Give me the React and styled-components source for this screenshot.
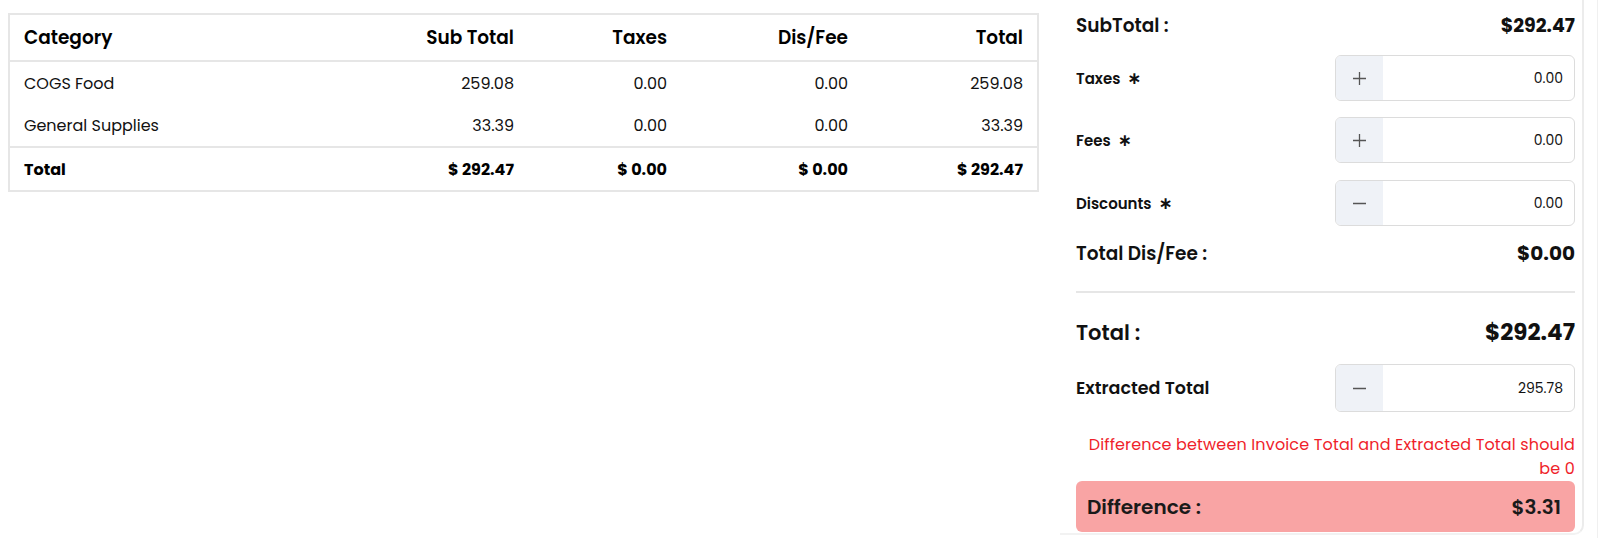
import React from "react";
import styled, { createGlobalStyle } from "styled-components";

const FONT = `"Poppins", "Open Sans", "Noto Sans", sans-serif`;

const GlobalStyle = createGlobalStyle`
  * { box-sizing: border-box; }
  body {
    margin: 0;
    background: #ffffff;
    font-family: ${FONT};
    color: #111;
  }
`;

const rows = [
  { category: "COGS Food", sub: "259.08", taxes: "0.00", fee: "0.00", total: "259.08" },
  { category: "General Supplies", sub: "33.39", taxes: "0.00", fee: "0.00", total: "33.39" },
];

const Plus = () => (
  <svg width="15" height="15" viewBox="0 0 15 15" fill="none">
    <path d="M7.5 1v13M1 7.5h13" stroke="#555" strokeWidth="1.3" />
  </svg>
);

const Minus = () => (
  <svg width="15" height="15" viewBox="0 0 15 15" fill="none">
    <path d="M1 7.5h13" stroke="#555" strokeWidth="1.3" />
  </svg>
);

const App = () => {
  return (
    <>
      <GlobalStyle />
      <Page>
        <TableWrap>
          <Table>
            <colgroup>
              <col style={{ width: 338 }} />
              <col style={{ width: 180 }} />
              <col style={{ width: 153 }} />
              <col style={{ width: 181 }} />
              <col style={{ width: 175 }} />
            </colgroup>
            <thead>
              <tr>
                <Th>Category</Th>
                <Th $right>Sub Total</Th>
                <Th $right>Taxes</Th>
                <Th $right>Dis/Fee</Th>
                <Th $right>Total</Th>
              </tr>
            </thead>
            <tbody>
              {rows.map((r) => (
                <tr key={r.category}>
                  <Td>{r.category}</Td>
                  <Td $right>{r.sub}</Td>
                  <Td $right>{r.taxes}</Td>
                  <Td $right>{r.fee}</Td>
                  <Td $right>{r.total}</Td>
                </tr>
              ))}
            </tbody>
            <tfoot>
              <tr>
                <Tf>Total</Tf>
                <Tf $right>$ 292.47</Tf>
                <Tf $right>$ 0.00</Tf>
                <Tf $right>$ 0.00</Tf>
                <Tf $right>$ 292.47</Tf>
              </tr>
            </tfoot>
          </Table>
        </TableWrap>

        <Summary>
          <SumRow>
            <SumLabel $size={18.5}>SubTotal :</SumLabel>
            <SumValue $size={19}>$292.47</SumValue>
          </SumRow>

          <InputRow $mt={5}>
            <FieldLabel>
              Taxes <Star>∗</Star>
            </FieldLabel>
            <Field>
              <Addon>
                <Plus />
              </Addon>
              <FieldValue>0.00</FieldValue>
            </Field>
          </InputRow>

          <InputRow $mt={16}>
            <FieldLabel>
              Fees <Star>∗</Star>
            </FieldLabel>
            <Field>
              <Addon>
                <Plus />
              </Addon>
              <FieldValue>0.00</FieldValue>
            </Field>
          </InputRow>

          <InputRow $mt={17}>
            <FieldLabel>
              Discounts <Star>∗</Star>
            </FieldLabel>
            <Field>
              <Addon>
                <Minus />
              </Addon>
              <FieldValue>0.00</FieldValue>
            </Field>
          </InputRow>

          <SumRow $mt={2}>
            <SumLabel $size={18.5}>Total Dis/Fee :</SumLabel>
            <SumValue $size={20}>$0.00</SumValue>
          </SumRow>

          <Divider />

          <SumRow $mt={14}>
            <SumLabel $size={21}>Total :</SumLabel>
            <SumValue $size={23}>$292.47</SumValue>
          </SumRow>

          <InputRow $mt={7}>
            <FieldLabel $size={17.5}>Extracted Total</FieldLabel>
            <Field $h={48}>
              <Addon>
                <Minus />
              </Addon>
              <FieldValue>295.78</FieldValue>
            </Field>
          </InputRow>

          <ErrorText>
            Difference between Invoice Total and Extracted Total should be 0
          </ErrorText>

          <DiffBox>
            <span>Difference :</span>
            <span>$3.31</span>
          </DiffBox>
        </Summary>
      </Page>
    </>
  );
};

const Page = styled.div`
  display: flex;
  align-items: flex-start;
  width: 1598px;
  height: 538px;
  overflow: hidden;
  border-right: 1px solid #f0f0f0;
`;

const TableWrap = styled.div`
  flex-shrink: 0;
  width: 1031px;
  margin: 13px 0 0 8px;
  border: 2px solid #e6e6e6;
`;

const Table = styled.table`
  width: 100%;
  table-layout: fixed;
  border-collapse: separate;
  border-spacing: 0;
`;

const Th = styled.th`
  height: 47px;
  padding: 0 14px;
  text-align: ${(p) => (p.$right ? "right" : "left")};
  font-size: 18.5px;
  font-weight: 600;
  color: #000;
  border-bottom: 2px solid #e6e6e6;
`;

const Td = styled.td`
  height: 42px;
  padding: 0 14px;
  text-align: ${(p) => (p.$right ? "right" : "left")};
  font-size: 16px;
  font-weight: 400;
  color: #111;
`;

const Tf = styled.td`
  height: 44px;
  padding: 0 14px;
  text-align: ${(p) => (p.$right ? "right" : "left")};
  font-size: 16px;
  font-weight: 700;
  color: #000;
  border-top: 2px solid #e6e6e6;
`;

const Summary = styled.div`
  flex-shrink: 0;
  display: flex;
  flex-direction: column;
  width: 524px;
  height: 535px;
  margin-left: 21px;
  padding: 0 7px 1px 16px;
  border-right: 2px solid #ececec;
  border-bottom: 2px solid #f2f2f2;
  border-bottom-right-radius: 10px;
`;

const SumRow = styled.div`
  display: flex;
  align-items: center;
  justify-content: space-between;
  height: 50px;
  margin-top: ${(p) => p.$mt || 0}px;
  color: #111;
`;

const SumLabel = styled.span`
  font-size: ${(p) => p.$size || 18}px;
  font-weight: 600;
`;

const SumValue = styled.span`
  font-size: ${(p) => p.$size || 18}px;
  font-weight: 700;
`;

const InputRow = styled.div`
  display: flex;
  align-items: center;
  justify-content: space-between;
  margin-top: ${(p) => p.$mt || 0}px;
`;

const FieldLabel = styled.span`
  display: flex;
  align-items: center;
  gap: 7px;
  font-size: ${(p) => p.$size || 15}px;
  font-weight: 600;
  color: #111;
`;

const Star = styled.span`
  font-family: "DejaVu Sans", sans-serif;
  font-size: 17px;
  font-weight: 700;
`;

const Field = styled.div`
  display: flex;
  width: 240px;
  height: ${(p) => p.$h || 46}px;
  border: 1px solid #dcdcdc;
  border-radius: 6px;
  overflow: hidden;
`;

const Addon = styled.div`
  display: flex;
  align-items: center;
  justify-content: center;
  width: 47px;
  background: #eff2f7;
`;

const FieldValue = styled.div`
  flex: 1;
  display: flex;
  align-items: center;
  justify-content: flex-end;
  padding-right: 11px;
  font-size: 14px;
  color: #111;
`;

const Divider = styled.div`
  height: 2px;
  margin-top: 13px;
  background: #e6e6e6;
`;

const ErrorText = styled.p`
  margin: 21px 0 0;
  text-align: right;
  font-size: 16px;
  letter-spacing: 0.15px;
  line-height: 24px;
  color: #ef1f2b;
`;

const DiffBox = styled.div`
  display: flex;
  align-items: center;
  justify-content: space-between;
  height: 51px;
  padding: 0 14px 0 11px;
  border-radius: 6px;
  background: #f9a4a4;
  font-size: 20px;
  font-weight: 600;
  color: #1a1a1a;
`;

export default App;
